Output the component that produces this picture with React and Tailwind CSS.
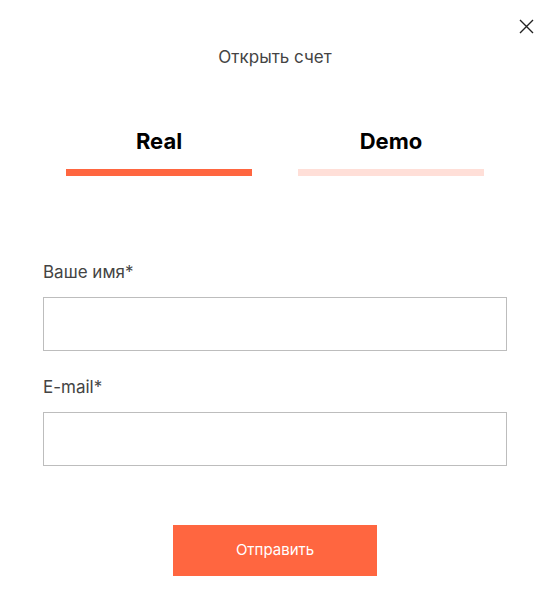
export default function App() {
  return (
    <div className="relative w-[550px] h-[593px] bg-white" style={{ fontFamily: 'Inter, "Noto Sans", sans-serif' }}>
      <button className="absolute right-[16px] top-[19px] w-[15px] h-[15px] text-[#222]">
        <svg viewBox="0 0 15 15" className="w-[15px] h-[15px]" fill="none" stroke="currentColor" strokeWidth="1.4">
          <path d="M1 1L14 14M14 1L1 14" />
        </svg>
      </button>

      <div className="pt-[45px] text-center text-[17px] leading-6 text-[#444]">Открыть счет</div>

      <div className="mt-[58px] flex justify-center gap-[46px]">
        <div className="w-[186px] flex flex-col items-center">
          <div className="text-[22px] leading-7 font-bold text-black">Real</div>
          <div className="mt-[14px] w-full h-[7px] bg-[#ff6640]" />
        </div>
        <div className="w-[186px] flex flex-col items-center">
          <div className="text-[22px] leading-7 font-bold text-black">Demo</div>
          <div className="mt-[14px] w-full h-[7px] bg-[#ffdfd8]" />
        </div>
      </div>

      <div className="px-[43px] mt-[84px]">
        <label className="block text-[17px] leading-6 text-[#444]">Ваше имя*</label>
        <input className="mt-[13px] block w-full h-[54px] border border-[#bdbdbd] outline-none px-3" />
        <label className="block mt-[24px] text-[17px] leading-6 text-[#444]">E-mail*</label>
        <input className="mt-[13px] block w-full h-[54px] border border-[#bdbdbd] outline-none px-3" />
      </div>

      <div className="mt-[59px] flex justify-center">
        <button className="w-[204px] h-[51px] bg-[#ff6640] text-white text-[15px]">Отправить</button>
      </div>
    </div>
  );
}
